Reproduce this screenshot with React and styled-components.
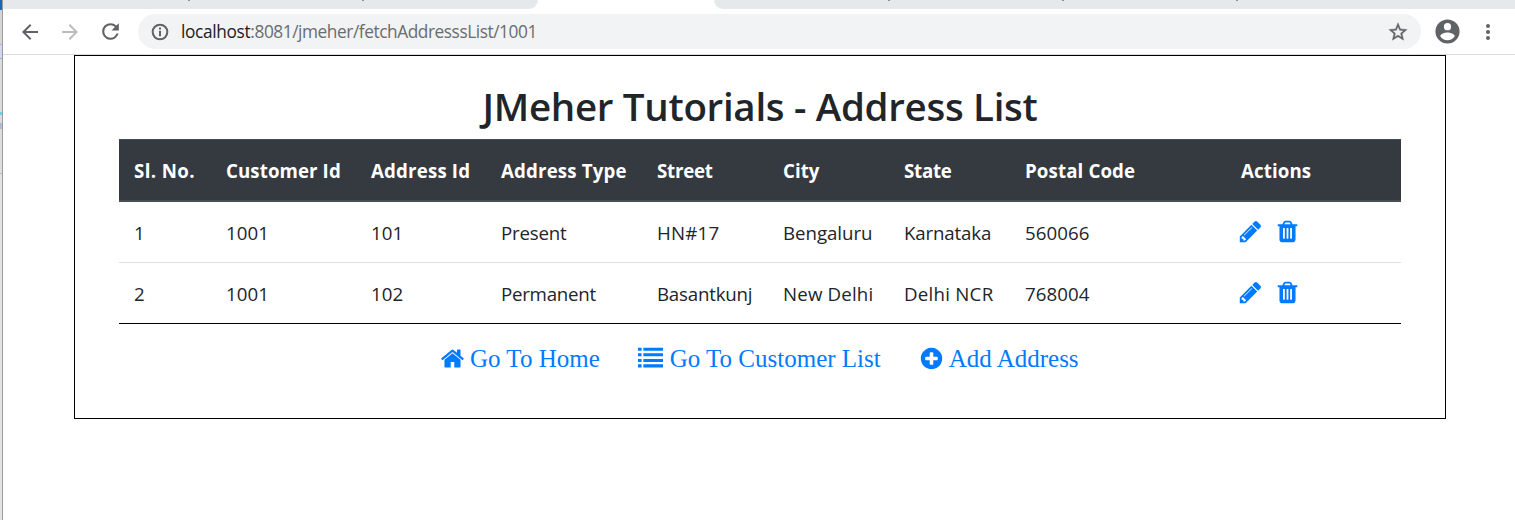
import React from "react";
import styled, { createGlobalStyle } from "styled-components";

const GlobalStyle = createGlobalStyle`
  * { box-sizing: border-box; }
  body { margin: 0; background: #fff; overflow: hidden; }
`;

const Screen = styled.div`
  display: flex;
  width: 1515px;
  height: 520px;
  background: #fff;
  font-family: "Open Sans", "Noto Sans", sans-serif;
  color: #212529;
`;

const DesktopEdge = styled.div`
  flex: none;
  width: 3px;
  border-right: 1px solid #9c9c9c;
  background: linear-gradient(
    #1767b3 0 10px, #d5d5d5 10px 44px, #a9b4cf 44px 45px, #cfd8ec 45px 58px,
    #a9b4cf 58px 59px, #dcdcdc 59px 112px, #6fd0ee 112px 115px, #dcdcdc 115px 123px,
    #b3bacd 123px 129px, #dedede 129px 173px, #bdbdbd 173px 174px, #e2e2e2 174px
  );
`;

const Browser = styled.div`
  flex: 1;
  display: flex;
  flex-direction: column;
`;

const TabStrip = styled.div`
  display: flex;
  justify-content: space-between;
  height: 9px;
`;

const TabGroup = styled.div`
  display: flex;
  gap: 172px;
  width: ${(p) => p.$width}px;
  padding-left: ${(p) => p.$inset}px;
  background: #e5e9ec;
  border-radius: ${(p) => (p.$side === "left" ? "0 0 10px 0" : "0 0 0 10px")};
`;

const TabMark = styled.span`
  width: 2px;
  height: 1px;
  background: #8d9094;
`;

const Toolbar = styled.div`
  display: flex;
  align-items: center;
  height: 46px;
  padding-left: 15px;
  border-bottom: 1px solid #dadce0;
`;

const ToolIcon = styled.svg`
  flex: none;
  width: ${(p) => p.$size}px;
  height: ${(p) => p.$size}px;
  margin-right: ${(p) => p.$after || 0}px;
  fill: ${(p) => p.$color || "#5f6368"};
`;

const AddressBar = styled.div`
  display: flex;
  align-items: center;
  width: 1283px;
  height: 35px;
  margin-right: 12px;
  padding: 0 12px;
  border-radius: 18px;
  background: #f1f3f4;
`;

const Url = styled.div`
  flex: 1;
  font-size: 17.3px;
  line-height: 24px;
  letter-spacing: -0.44px;
  color: #696c70;
`;

const Host = styled.span`
  letter-spacing: -0.34px;
  color: #202124;
`;

const Panel = styled.main`
  width: 1372px;
  height: 364px;
  margin-left: 71px;
  padding: 26px 44px 0;
  border: 1px solid #000;
`;

const Title = styled.h1`
  height: 48px;
  margin: 0 0 9px;
  font-size: 38.5px;
  font-weight: 550;
  line-height: 48px;
  letter-spacing: -0.3px;
  text-align: center;
`;

const Table = styled.div`
  display: flex;
  flex-direction: column;
`;

const Row = styled.div`
  display: grid;
  grid-template-columns: 92px 145px 130px 156px 126px 121px 121px 216px 1fr;
  align-items: center;
  height: 61px;
  padding-left: 15px;
  border-bottom: 1px solid ${(p) => (p.$last ? "#000" : "#dee2e6")};
`;

const HeadRow = styled(Row)`
  height: 63px;
  border-top: 1px solid #454d55;
  border-bottom: 2px solid #454d55;
  background: #343a40;
  color: #fff;
  font-weight: 700;
`;

const Cell = styled.div`
  padding-top: 2px;
  font-size: 18.7px;
  line-height: 28px;
  white-space: nowrap;
  letter-spacing: ${(p) => p.$track || 0}px;
`;

const Actions = styled.div`
  display: flex;
  gap: 12px;
  margin-left: -3.5px;
  padding-bottom: 2px;
`;

const Glyph = styled.svg`
  flex: none;
  width: 25px;
  height: 25px;
  fill: #007bff;
`;

const Links = styled.nav`
  display: flex;
  gap: 38px;
  height: 28px;
  margin-top: 20px;
  padding-left: 321px;
`;

const LinkItem = styled.a`
  display: flex;
  align-items: center;
  gap: ${(p) => p.$gap}px;
  font-family: "Liberation Serif", serif;
  font-size: 25px;
  line-height: 28px;
  white-space: nowrap;
  color: #007bff;
`;

const LinkText = styled.span`
  padding-top: 2px;
`;

const glyphs = {
  pencil:
    "M491 1536l91-91-235-235-91 91v107h128v128h107zm523-928q0-22-22-22-10 0-17 7l-542 542q-7 7-7 17 0 22 22 22 10 0 17-7l542-542q7-7 7-17zm-54-192l416 416-832 832h-416v-416zm683 96q0 53-37 90l-166 166-416-416 166-165q36-38 90-38 53 0 91 38l235 234q37 39 37 91z",
  trash:
    "M704 1376v-704q0-14-9-23t-23-9h-64q-14 0-23 9t-9 23v704q0 14 9 23t23 9h64q14 0 23-9t9-23zm256 0v-704q0-14-9-23t-23-9h-64q-14 0-23 9t-9 23v704q0 14 9 23t23 9h64q14 0 23-9t9-23zm256 0v-704q0-14-9-23t-23-9h-64q-14 0-23 9t-9 23v704q0 14 9 23t23 9h64q14 0 23-9t9-23zm-544-992h448l-48-117q-7-9-17-11h-317q-10 2-17 11zm928 32v64q0 14-9 23t-23 9h-96v948q0 83-47 143.5t-113 60.5h-832q-66 0-113-58.5t-47-141.5v-952h-96q-14 0-23-9t-9-23v-64q0-14 9-23t23-9h309l70-167q15-37 54-63t79-26h320q40 0 79 26t54 63l70 167h309q14 0 23 9t9 23z",
  home:
    "M1472 992v480q0 26-19 45t-45 19h-384v-384h-256v384h-384q-26 0-45-19t-19-45v-480q0-1 .5-3t.5-3l575-474 575 474q1 2 1 6zm223-69l-62 74q-8 9-21 11h-3q-13 0-21-7l-692-577-692 577q-12 8-24 7-13-2-21-11l-62-74q-8-10-7-23.5t11-21.5l719-599q32-26 76-26t76 26l244 204v-195q0-14 9-23t23-9h192q14 0 23 9t9 23v408l219 182q10 8 11 21.5t-7 23.5z",
  list:
    "M0 1312h256v224H0zM0 928h256v224H0zM0 519h256v224H0zM0 125h256v224H0zM384 1312h1408v224H384zM384 928h1408v224H384zM384 519h1408v224H384zM384 125h1408v224H384z",
  plus:
    "M1344 960v-128q0-26-19-45t-45-19h-256v-256q0-26-19-45t-45-19h-128q-26 0-45 19t-19 45v256h-256q-26 0-45 19t-19 45v128q0 26 19 45t45 19h256v256q0 26 19 45t45 19h128q26 0 45-19t19-45v-256h256q26 0 45-19t19-45zm320-64q0 209-103 385.5t-279.5 279.5-385.5 103-385.5-103-279.5-279.5-103-385.5 103-385.5 279.5-279.5 385.5-103 385.5 103 279.5 279.5 103 385.5z",
};

const toolPaths = {
  back: "M20 11H7.83l5.59-5.59L12 4l-8 8 8 8 1.41-1.41L7.83 13H20v-2z",
  forward: "M12 4l-1.41 1.41L16.17 11H4v2h12.17l-5.58 5.59L12 20l8-8z",
  reload:
    "M17.65 6.35A7.958 7.958 0 0 0 12 4a8 8 0 1 0 7.73 10h-2.08A5.99 5.99 0 0 1 12 18a6 6 0 1 1 0-12c1.66 0 3.14.69 4.22 1.78L13 11h7V4z",
  info:
    "M10.8 6.6h2.4v2.4h-2.4zm0 4h2.4v6.6h-2.4zm1.2-8.6a10 10 0 1 0 0 20 10 10 0 0 0 0-20zm0 17.6a7.6 7.6 0 1 1 0-15.2 7.6 7.6 0 0 1 0 15.2z",
  star:
    "M22 9.24l-7.19-.62L12 2 9.19 8.63 2 9.24l5.46 4.73L5.82 21 12 17.27 18.18 21l-1.63-7.03zM12 15.4l-3.76 2.27 1-4.28-3.32-2.88 4.38-.38L12 6.1l1.71 4.04 4.38.38-3.32 2.88 1 4.28z",
  profile:
    "M12 2a10 10 0 1 0 0 20 10 10 0 0 0 0-20zm0 3a3 3 0 1 1 0 6 3 3 0 0 1 0-6zm0 14.2a7.2 7.2 0 0 1-6-3.22c.03-1.99 4-3.08 6-3.08 1.99 0 5.97 1.09 6 3.08a7.2 7.2 0 0 1-6 3.22z",
  menu:
    "M12 8a2 2 0 1 0 0-4 2 2 0 0 0 0 4zm0 2a2 2 0 1 0 0 4 2 2 0 0 0 0-4zm0 6a2 2 0 1 0 0 4 2 2 0 0 0 0-4z",
};

const Tool = ({ name, size, after, color }) => (
  <ToolIcon viewBox="0 0 24 24" $size={size} $after={after} $color={color}>
    <path
      d={toolPaths[name]}
      stroke={name === "star" ? "#5f6368" : "none"}
      strokeWidth="0.4"
    />
  </ToolIcon>
);

const Icon = ({ name }) => (
  <Glyph viewBox="0 0 1792 1792">
    <path d={glyphs[name]} />
  </Glyph>
);

const columns = [
  ["Sl. No.", 0.4],
  ["Customer Id", 0.08],
  ["Address Id", 0.17],
  ["Address Type", 0.15],
  ["Street", -0.25],
  ["City", 0.05],
  ["State", -0.25],
  ["Postal Code", 0.12],
  ["Actions", 0.1],
];

const addresses = [
  [["1"], ["1001", 0.1], ["101", 0.1], ["Present", -0.2], ["HN#17", 0.2], ["Bengaluru", -0.05], ["Karnataka", -0.15], ["560066", 0.05]],
  [["2"], ["1001", 0.1], ["102", 0.1], ["Permanent", -0.25], ["Basantkunj", -0.2], ["New Delhi", 0.17], ["Delhi NCR", 0.25], ["768004", 0.05]],
];

export default function App() {
  return (
    <>
      <GlobalStyle />
      <Screen>
        <DesktopEdge />
        <Browser>
          <TabStrip>
            <TabGroup $width={535} $inset={185} $side="left">
              <TabMark />
              <TabMark />
            </TabGroup>
            <TabGroup $width={801} $inset={174} $side="right">
              <TabMark />
              <TabMark />
              <TabMark />
            </TabGroup>
          </TabStrip>
          <Toolbar>
            <Tool name="back" size={24} after={16} />
            <Tool name="forward" size={24} after={16} color="#babcbe" />
            <Tool name="reload" size={25} after={15} />
            <AddressBar>
              <Tool name="info" size={20} after={11} />
              <Url>
                <Host>localhost</Host>:8081/jmeher/fetchAddresssList/1001
              </Url>
              <Tool name="star" size={22} />
            </AddressBar>
            <Tool name="profile" size={29} after={14} />
            <Tool name="menu" size={24} />
          </Toolbar>
          <Panel>
            <Title>JMeher Tutorials - Address List</Title>
            <Table>
              <HeadRow>
                {columns.map(([label, track]) => (
                  <Cell key={label} $track={track}>{label}</Cell>
                ))}
              </HeadRow>
              {addresses.map((row, i) => (
                <Row key={i} $last={i === addresses.length - 1}>
                  {row.map(([value, track], j) => (
                    <Cell key={j} $track={track}>{value}</Cell>
                  ))}
                  <Actions>
                    <Icon name="pencil" />
                    <Icon name="trash" />
                  </Actions>
                </Row>
              ))}
            </Table>
            <Links>
              <LinkItem $gap={5}><Icon name="home" /><LinkText>Go To Home</LinkText></LinkItem>
              <LinkItem $gap={7}><Icon name="list" /><LinkText>Go To Customer List</LinkText></LinkItem>
              <LinkItem $gap={5}><Icon name="plus" /><LinkText>Add Address</LinkText></LinkItem>
            </Links>
          </Panel>
        </Browser>
      </Screen>
    </>
  );
}
